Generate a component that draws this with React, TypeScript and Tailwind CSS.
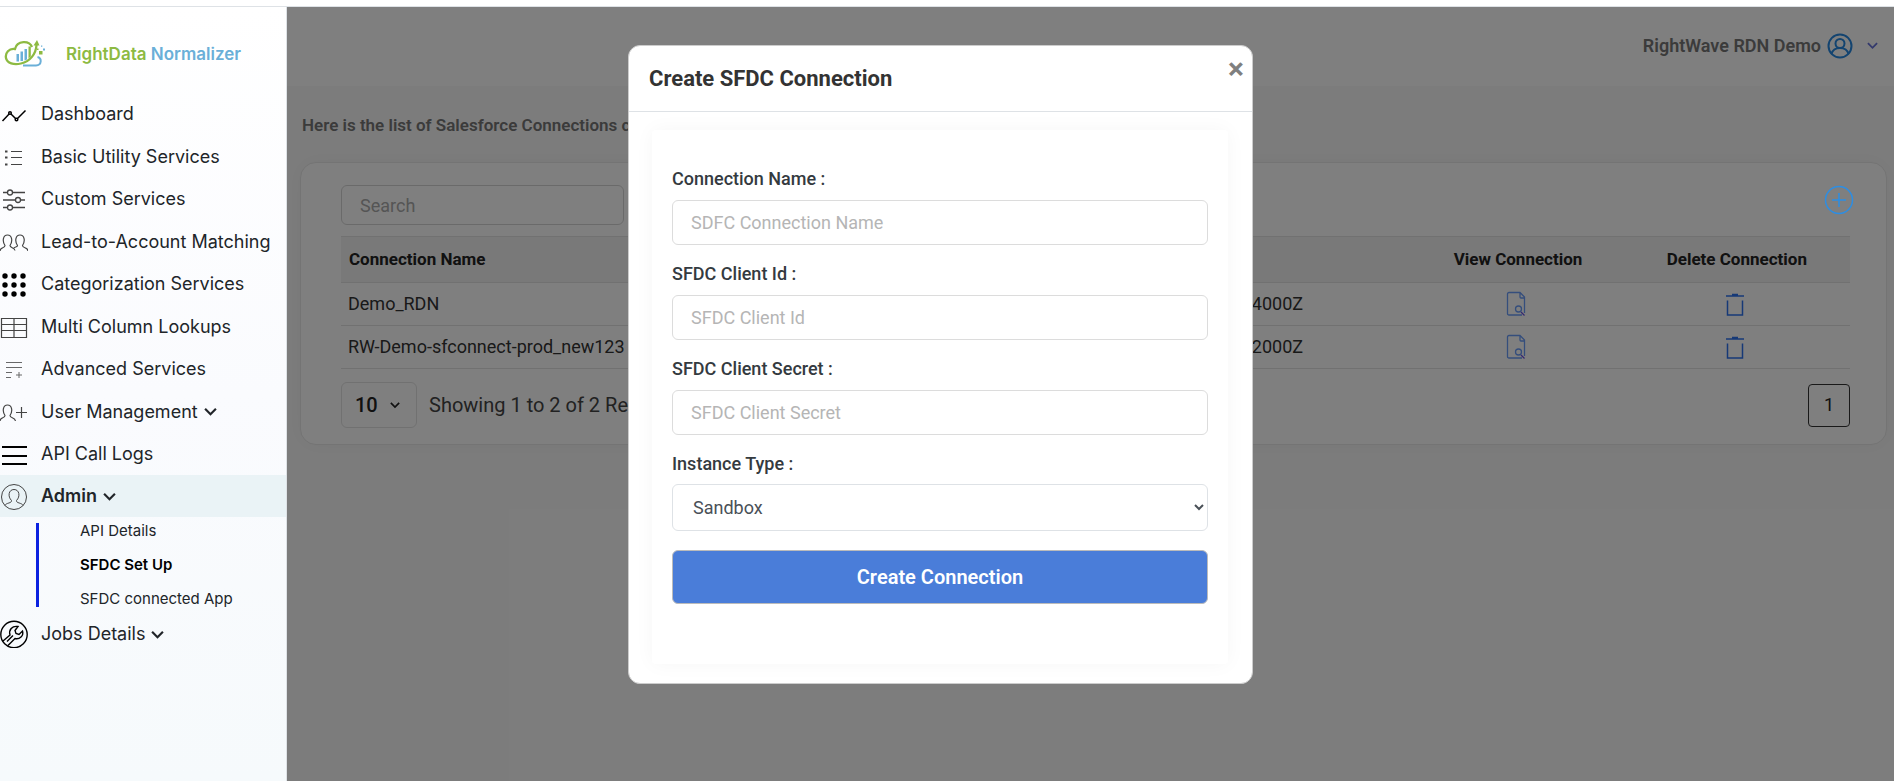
import { ReactNode, useState } from "react";

const iconStroke = { fill: "none", stroke: "currentColor", strokeWidth: 1 };

function Logo() {
  return (
    <svg width="42" height="28" viewBox="0 0 42 28" fill="none">
      <path d="M19 25.400h13c6 0 6-7.500 1.500-8.500" stroke="#6aafd8" strokeWidth="2" />
      <path d="M12.500 14h2.500v7.500h-2.500zM16.500 11.500h2.500v9.500h-2.500z" fill="#6aafd8" />
      <path d="M20.500 9h2.500v10.500l-2.500 1z" fill="#6aafd8" />
      <path d="M24.500 6.500h2.300v10l-2.300 2z" fill="#8dba42" />
      <path
        d="M28 7C25.500 0.500 13 0 11 9 5 8 1 13 2 18c1 5.500 8 7 15 5.500C26 21.500 32 14 32.500 5"
        stroke="#8dba42"
        strokeWidth="2.300"
      />
      <path d="M29.500 5.500L33 0l2.500 5.500z" fill="#8dba42" />
      <path d="M35 11h3.500v3.500H35zM33 8.500h1.500V10H33z" fill="#8dba42" />
      <path d="M39 8.500h2v2h-2zM37 5.500h1.300v1.300H37z" fill="#6aafd8" />
    </svg>
  );
}

function ChartIcon() {
  return (
    <svg width="28" height="28" viewBox="0 0 28 28" {...iconStroke} stroke="black" strokeWidth={1.5}>
      <path d="M2.500 21l7.500-8 6.500 6.500 9-9" />
      <circle cx="10" cy="13" r="1.300" fill="white" />
      <circle cx="16.500" cy="19.500" r="1.300" fill="white" />
    </svg>
  );
}

function ListIcon() {
  return (
    <svg width="28" height="28" viewBox="0 0 28 28" {...iconStroke}>
      <path d="M11 8.500h11M11 14.500h11M11 21.500h11" />
      <path d="M5 8.500h2.500M5 14.500h2.500M5 21.500h2.500" strokeWidth="2" />
    </svg>
  );
}

function SlidersIcon() {
  return (
    <svg width="28" height="28" viewBox="0 0 28 28" {...iconStroke} strokeWidth={1.300}>
      <path d="M3 7.500h4M13 7.500h12M3 15h12M20.500 15H25M3 22.500h4M13 22.500h12" />
      <circle cx="10" cy="7.500" r="2.500" />
      <circle cx="18" cy="15" r="2.500" />
      <circle cx="10" cy="22.500" r="2.500" />
    </svg>
  );
}

function PeopleIcon() {
  return (
    <svg width="28" height="28" viewBox="0 0 28 28" {...iconStroke} strokeWidth={1.200}>
      <path d="M0 23c0-4 5-2.500 5-5.500C2 13 3 7 7.500 7S13 13 10 17.500c0 2.500 4.500 2 5 5" />
      <path d="M13.500 20.500c1-2 4-1 4-3C14.500 13 15.500 7 20 7s5.500 6 2.500 10.500c0 3 5.500 1.500 5.500 5.500" />
    </svg>
  );
}

function GridIcon() {
  return (
    <svg width="28" height="28" viewBox="0 0 28 28" fill="black">
      {[6, 15, 24].map((y) =>
        [5, 14, 23].map((x) => <circle key={`${x}-${y}`} cx={x} cy={y} r="2.700" />)
      )}
    </svg>
  );
}

function TableIcon() {
  return (
    <svg width="28" height="28" viewBox="0 0 28 28" {...iconStroke} strokeWidth={1.200}>
      <path d="M1.500 5.500h25v19h-25zM14 5.500v19M1.500 11.500h25M1.500 17.500h25" />
    </svg>
  );
}

function AddListIcon() {
  return (
    <svg width="28" height="28" viewBox="0 0 28 28" {...iconStroke} opacity="0.8">
      <path d="M6 7.500h16M6 12.500h16M6 17.500h6M6 22.500h5M16 20h6M19 17v6" />
    </svg>
  );
}

function UserPlusIcon() {
  return (
    <svg width="28" height="28" viewBox="0 0 28 28" {...iconStroke} strokeWidth={1.200}>
      <path d="M0 23c0-4 5-2.500 5-5.500C2 13 3 7 7.500 7S13 13 10 17.500c0 3 5 1.500 5.500 5.500" />
      <path d="M16 14.500h11M21.500 9v11" />
    </svg>
  );
}

function MenuIcon() {
  return (
    <svg width="28" height="28" viewBox="0 0 28 28" {...iconStroke} stroke="black" strokeWidth={2}>
      <path d="M2 7h25M2 16h25M2 24h25" />
    </svg>
  );
}

function AdminIcon() {
  return (
    <svg width="28" height="28" viewBox="0 0 28 28" {...iconStroke}>
      <circle cx="14" cy="15" r="12.500" />
      <path d="M5 23.500c1-3 7-2 6.500-5-4-4-3-11 2.500-11s6.500 7 2.500 11c-.5 3 5.500 2 6.500 5" />
    </svg>
  );
}

function WrenchIcon() {
  return (
    <svg width="28" height="28" viewBox="0 0 28 28" {...iconStroke} stroke="black" strokeWidth={1.400}>
      <circle cx="14" cy="14.500" r="13.200" />
      <path d="M3 21l7-6c-1.500-5 2-9.500 8-8.500l-3 4 1 3 3 1 3.500-3.500c1.500 5-3 8.500-7.500 7.500l-7 7M7 21.500l6-6" />
    </svg>
  );
}

function Chevron({ size = 12 }: { size?: number }) {
  return (
    <svg width={size} height={size} viewBox="0 0 12 12" fill="none" stroke="currentColor" strokeWidth="2">
      <path d="M1 3.500l5 5 5-5" />
    </svg>
  );
}

function ViewIcon() {
  return (
    <svg width="20" height="26" viewBox="0 0 20 26" fill="none" stroke="#6a9cf8" strokeWidth="1.300">
      <path d="M16 24H3q-1.500 0-1.500-1.500V3Q1.500 1.500 3 1.500h11L18.500 6v16M14 1.500V6q0 1 1 1h3.500" />
      <circle cx="12.500" cy="18" r="3" />
      <path d="M15 21l3.500 3.500" stroke="#6a50e0" />
    </svg>
  );
}

function TrashIcon() {
  return (
    <svg width="20" height="26" viewBox="0 0 20 26" fill="none" stroke="#2c72ee" strokeWidth="1.500">
      <path d="M1 5h18M7 3.500h6M2.500 9.500V24h15V9.500" />
    </svg>
  );
}

interface NavItem {
  label: string;
  icon: ReactNode;
  caret?: boolean;
}

const topItems: NavItem[] = [
  { label: "Dashboard", icon: <ChartIcon /> },
  { label: "Basic Utility Services", icon: <ListIcon /> },
  { label: "Custom Services", icon: <SlidersIcon /> },
  { label: "Lead-to-Account Matching", icon: <PeopleIcon /> },
  { label: "Categorization Services", icon: <GridIcon /> },
  { label: "Multi Column Lookups", icon: <TableIcon /> },
  { label: "Advanced Services", icon: <AddListIcon /> },
  { label: "User Management", icon: <UserPlusIcon />, caret: true },
  { label: "API Call Logs", icon: <MenuIcon /> },
];

const adminItems = ["API Details", "SFDC Set Up", "SFDC connected App"];

const connections = [
  { name: "Demo_RDN", created: "2023-08-17T10:22:14.4000Z" },
  { name: "RW-Demo-sfconnect-prod_new123", created: "2023-09-05T07:41:32.2000Z" },
];

function NavLink({ item, active = false }: { item: NavItem; active?: boolean }) {
  return (
    <a
      href="#"
      className={`flex items-center gap-[13px] text-lg leading-[42px] text-[#212529] ${
        active ? "bg-[#eaf3f6] font-semibold" : ""
      }`}
    >
      <span className="w-7 shrink-0 text-[#444]">{item.icon}</span>
      <span className="flex items-center gap-1.5">
        {item.label}
        {item.caret && <Chevron size={13} />}
      </span>
    </a>
  );
}

function Sidebar() {
  return (
    <aside className="w-[287px] shrink-0 border-r border-[#dee2e6] bg-gradient-to-b from-white via-[#fafbfe] to-[#f6fafc] font-['Inter',sans-serif]">
      <div className="flex items-center gap-5 pt-[33px] pl-1 text-[17px] leading-7 font-semibold">
        <Logo />
        <p>
          <span className="text-[#8dba42]">RightData</span>{" "}
          <span className="text-[#6aafd8]">Normalizer</span>
        </p>
      </div>
      <nav className="pt-[25px]">
        <div className="flex h-[382px] flex-col justify-between">
          {topItems.map((item) => (
            <NavLink item={item} key={item.label} />
          ))}
        </div>
        <NavLink item={{ label: "Admin", icon: <AdminIcon />, caret: true }} active />
        <ul className="my-1.5 ml-9 flex flex-col gap-[18px] border-l-3 border-[#0b22e0]">
          {adminItems.map((label) => (
            <li key={label}>
              <a
                href="#"
                className={`block pl-[41px] text-[15px] leading-4 ${
                  label === "SFDC Set Up" ? "font-semibold text-black" : "text-[#212529]"
                }`}
              >
                {label}
              </a>
            </li>
          ))}
        </ul>
        <NavLink item={{ label: "Jobs Details", icon: <WrenchIcon />, caret: true }} />
      </nav>
    </aside>
  );
}

function Header() {
  return (
    <header className="flex h-[79px] items-center justify-end bg-white pr-4 pb-0.5">
      <button className="flex items-center text-lg font-semibold text-[#777]">
        RightWave RDN Demo
        <svg
          className="ml-1.5"
          width="26"
          height="26"
          viewBox="0 0 26 26"
          fill="none"
          stroke="#2788e0"
          strokeWidth="2"
        >
          <circle cx="13" cy="13" r="11.500" />
          <circle cx="13" cy="10.500" r="4.500" />
          <path d="M4.500 21c1-4 4-6 8.500-6s7.500 2 8.500 6" />
        </svg>
        <span className="ml-3.5 text-[#6672d8]">
          <Chevron size={11} />
        </span>
      </button>
    </header>
  );
}

function ConnectionTable() {
  return (
    <table className="mt-[11px] w-full table-fixed border-collapse text-left text-lg text-[#333]">
      <colgroup>
        <col className="w-[42%]" />
        <col className="w-[29%]" />
        <col className="w-[14%]" />
        <col className="w-[15%]" />
      </colgroup>
      <thead>
        <tr className="h-[46px] border-y border-[#e2e2e2] bg-[#f2f2f2] text-[17px] text-[#222]">
          <th className="px-2 font-bold">Connection Name</th>
          <th className="text-center font-bold">Created Date</th>
          <th className="text-center font-bold">View Connection</th>
          <th className="text-center font-bold">Delete Connection</th>
        </tr>
      </thead>
      <tbody>
        {connections.map((connection) => (
          <tr className="h-[43px] border-b border-[#e2e2e2]" key={connection.name}>
            <td className="px-[7px]">{connection.name}</td>
            <td className="pr-2 text-center">{connection.created}</td>
            <td className="pr-1">
              <button className="mx-auto block" aria-label="View connection">
                <ViewIcon />
              </button>
            </td>
            <td className="pr-1">
              <button className="mx-auto block" aria-label="Delete connection">
                <TrashIcon />
              </button>
            </td>
          </tr>
        ))}
      </tbody>
    </table>
  );
}

function CreateConnectionModal({ onClose }: { onClose: () => void }) {
  const fields = [
    { id: "name", label: "Connection Name :", placeholder: "SDFC Connection Name" },
    { id: "client", label: "SFDC Client Id :", placeholder: "SFDC Client Id" },
    { id: "secret", label: "SFDC Client Secret :", placeholder: "SFDC Client Secret" },
  ];

  return (
    <div className="fixed inset-0 z-20 flex items-start justify-center pt-[45px] pr-[13px]">
      <div
        role="dialog"
        aria-labelledby="modal-title"
        className="relative w-[625px] rounded-xl border border-[#ccc] bg-white"
      >
        <div className="border-b border-[#dee2e6] px-5 py-4">
          <h2 id="modal-title" className="text-[22px] leading-[33px] font-bold text-[#333]">
            Create SFDC Connection
          </h2>
        </div>
        <button
          className="absolute top-[9px] right-1.5 h-7 w-5 text-3xl leading-7 font-bold text-[#7f7f7f]"
          aria-label="Close"
          onClick={onClose}
        >
          ×
        </button>
        <form
          className="mt-[18px] mr-6 mb-[19px] ml-[23px] rounded px-5 pt-[37px] pb-[60px] shadow-[0_0_20px_rgba(0,0,0,0.04)]"
          onSubmit={(e) => e.preventDefault()}
        >
          {fields.map((field) => (
            <div className="mb-[17px]" key={field.id}>
              <label
                htmlFor={field.id}
                className="mb-[9px] block text-lg leading-6 font-medium text-[#343a40]"
              >
                {field.label}
              </label>
              <input
                id={field.id}
                className="h-[45px] w-full rounded-md border border-[#dcdcdc] px-[18px] text-lg placeholder:text-[#b5b5b5]"
                placeholder={field.placeholder}
              />
            </div>
          ))}
          <label
            htmlFor="instance"
            className="mb-2 block text-lg leading-6 font-medium text-[#343a40]"
          >
            Instance Type :
          </label>
          <select
            id="instance"
            className="h-[47px] w-full rounded-md border border-[#dee2e6] bg-white px-4 text-lg text-[#495057]"
          >
            <option>Sandbox</option>
            <option>Production</option>
          </select>
          <button
            type="submit"
            className="mt-[19px] h-[54px] w-full rounded-md border border-[#bbb] bg-[#4a7dd9] text-xl font-semibold text-white"
          >
            Create Connection
          </button>
        </form>
      </div>
    </div>
  );
}

export default function App() {
  const [showModal, setShowModal] = useState(true);

  return (
    <div className="flex min-h-screen flex-col bg-white font-['Roboto',sans-serif]">
      <div className="h-[7px] border-b border-[#dee2e6]" />
      <div className="flex flex-1">
        <Sidebar />
        <main className="relative flex-1 bg-[#f9f9f9]">
          <Header />
          <p className="px-[15px] pt-[25px] text-[17px] leading-7 font-semibold text-[#777]">
            Here is the list of Salesforce Connections created
          </p>
          <section className="mt-[23px] mr-[7px] ml-[13px] rounded-2xl border border-[#e8e8e8] bg-white pt-[22px] pr-9 pb-4 pl-10 shadow-[0_0_20px_rgba(0,0,0,0.04)]">
            <div className="-mr-1 flex items-start justify-between">
              <input
                className="h-10 w-[283px] rounded-md border border-[#d5d5d5] px-[18px] text-lg placeholder:text-[#aaa]"
                placeholder="Search"
                aria-label="Search"
              />
              <button
                className="relative z-10 text-[#2d8ee3]"
                aria-label="Add connection"
                onClick={() => setShowModal(true)}
              >
                <svg width="30" height="30" viewBox="0 0 30 30" {...iconStroke} strokeWidth={1.500}>
                  <circle cx="15" cy="15" r="13.500" />
                  <path d="M8 15h14M15 8v14" />
                </svg>
              </button>
            </div>
            <ConnectionTable />
            <div className="mt-[13px] flex items-center">
              <button className="flex h-[46px] w-19 items-center justify-between rounded-md border border-[#e2e2e2] px-[13px] pr-4 text-xl font-medium text-[#222]">
                10
                <Chevron size={10} />
              </button>
              <span className="ml-3 text-xl text-[#444]">Showing 1 to 2 of 2 Results</span>
              <button className="ml-auto h-[43px] w-[42px] rounded border border-[#333] text-lg text-[#222]">
                1
              </button>
            </div>
          </section>
          {showModal && <div className="absolute inset-0 bg-black/50" />}
        </main>
      </div>
      {showModal && <CreateConnectionModal onClose={() => setShowModal(false)} />}
    </div>
  );
}
